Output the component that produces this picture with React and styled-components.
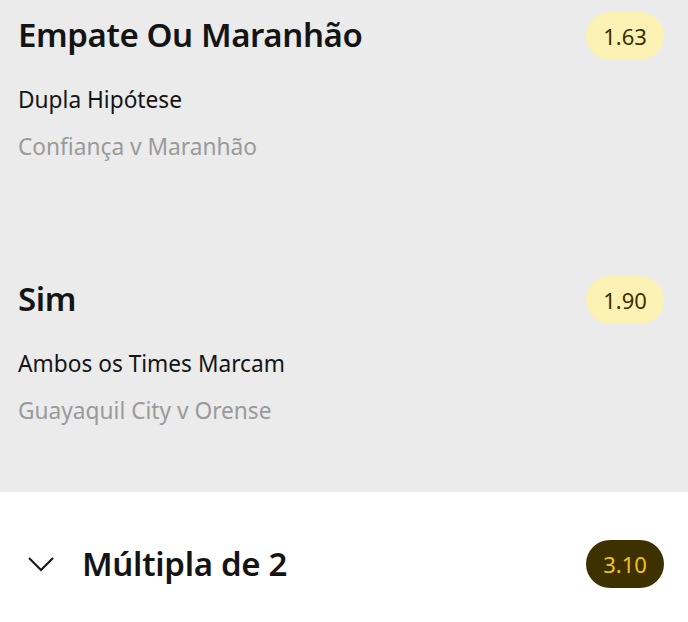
import React from "react";
import styled, { createGlobalStyle } from "styled-components";

const GlobalStyle = createGlobalStyle`
  html, body {
    margin: 0;
    padding: 0;
    background: #ffffff;
    font-family: "Noto Sans", "Open Sans", sans-serif;
  }
`;

const bets = [
  { pick: "Empate Ou Maranhão", market: "Dupla Hipótese", event: "Confiança v Maranhão", odds: "1.63" },
  { pick: "Sim", market: "Ambos os Times Marcam", event: "Guayaquil City v Orense", odds: "1.90" },
];

const App = () => {
  return (
    <>
      <GlobalStyle />
      <Page>
        <Selections>
          {bets.map((b) => (
            <Selection key={b.pick}>
              <Header>
                <Pick>{b.pick}</Pick>
                <Odds>{b.odds}</Odds>
              </Header>
              <Market>{b.market}</Market>
              <Event>{b.event}</Event>
            </Selection>
          ))}
        </Selections>
        <Footer>
          <Toggle>
            <Chevron viewBox="0 0 28 16">
              <path d="M2 2 L14 14 L26 2" fill="none" stroke="#1a1a1a" strokeWidth="2.2" />
            </Chevron>
            <MultiTitle>Múltipla de 2</MultiTitle>
          </Toggle>
          <Odds dark>3.10</Odds>
        </Footer>
      </Page>
    </>
  );
};

export default App;

const Page = styled.div`
  width: 688px;
  height: 622px;
  display: flex;
  flex-direction: column;
  overflow: hidden;
`;

const Selections = styled.div`
  background: #ebebeb;
  height: 492px;
  padding-top: 12px;
  box-sizing: border-box;
`;

const Selection = styled.div`
  height: 264px;
  padding: 0 24px 0 18px;
  box-sizing: border-box;
`;

const Header = styled.div`
  display: flex;
  justify-content: space-between;
  align-items: center;
  height: 48px;
`;

const Pick = styled.div`
  font-size: 33px;
  font-weight: 600;
  color: #141414;
  letter-spacing: -0.4px;
  margin-top: -3px;
`;

const Odds = styled.div`
  width: 78px;
  height: 48px;
  border-radius: 24px;
  display: flex;
  align-items: center;
  justify-content: center;
  font-size: 22px;
  background: ${(p) => (p.dark ? "#3d3100" : "#fbf1b3")};
  color: ${(p) => (p.dark ? "#f2c21a" : "#3b2f00")};
`;

const Market = styled.div`
  margin-top: 25px;
  font-size: 22.7px;
  line-height: 30px;
  color: #141414;
`;

const Event = styled.div`
  margin-top: 17px;
  font-size: 22.7px;
  line-height: 30px;
  color: #9a9a9a;
`;

const Footer = styled.div`
  flex: 1;
  background: #ffffff;
  display: flex;
  justify-content: space-between;
  align-items: flex-start;
  padding: 48px 24px 0 27px;
`;

const Toggle = styled.div`
  display: flex;
  align-items: center;
  height: 48px;
  gap: 27px;
`;

const Chevron = styled.svg`
  width: 28px;
  height: 16px;
`;

const MultiTitle = styled.div`
  font-size: 33px;
  font-weight: 600;
  color: #141414;
  letter-spacing: -0.3px;
  margin-top: -2px;
`;
